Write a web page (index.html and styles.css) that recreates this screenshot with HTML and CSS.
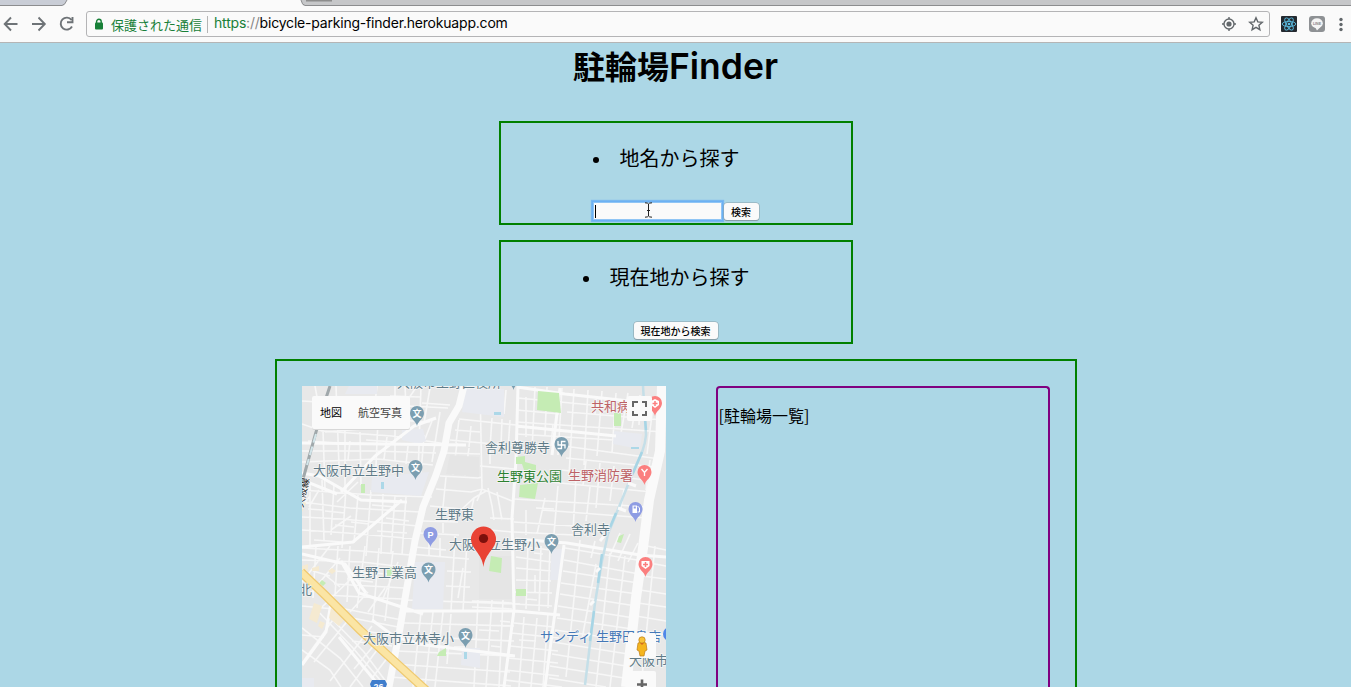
FILE: index.html
```
<!DOCTYPE html>
<html lang="ja">
<head>
<meta charset="utf-8">
<title>駐輪場Finder</title>
<link rel="stylesheet" href="styles.css">
</head>
<body>
<header class="browser">
  <svg class="tabs" width="1351" height="6" viewBox="0 0 1351 6">
    <path d="M0 0H67L64 5.500H0Z" fill="#c9cdd6"/>
    <path d="M301 0H1351V5.500H303Z" fill="#c6c7c9"/>
    <path d="M0 5.500H62Q65 5 67 0M301 0Q302 5 305 5.500H1351" fill="none" stroke="#8c8d8f"/>
    <path d="M306 .5H332" stroke="#8d8d8d" stroke-width="2"/>
  </svg>
  <div class="toolbar">
    <svg class="nav" width="80" height="36" viewBox="0 6 80 36" fill="none" stroke="#6e7377" stroke-width="1.900">
      <path d="M17.500 24H5M11 17.500L4.700 24l6.300 6.500M32 24H44.500M38.500 17.500l6.300 6.500-6.300 6.500"/>
      <path d="M71.500 20A6 6 0 1 0 72 26.500M72.500 17V22.200H67"/>
    </svg>
    <div class="address">
      <svg class="lock" width="10" height="12" viewBox="0 0 10 12"><path d="M2.600 5V3.500a2.300 2.300 0 0 1 4.600 0V5" fill="none" stroke="#188038" stroke-width="1.400"/><rect x="1" y="4.600" width="8" height="7" rx="1" fill="#188038"/></svg>
      <span class="secure">保護された通信</span>
      <span class="url"><span class="scheme">https</span><span class="slashes">://</span>bicycle-parking-finder.herokuapp.com</span>
      <svg class="address-icons" width="46" height="18" viewBox="1220 15 46 18" fill="none" stroke="#62676b" stroke-width="1.400">
        <circle cx="1229" cy="24" r="5"/><circle cx="1229" cy="24" r="2.600" fill="#62676b" stroke="none"/><path d="M1229 17v2M1229 29v2M1222 24h2M1234 24h2"/>
        <path d="M1256 17.800l1.800 4.100 4.500.4-3.400 3 1 4.400-3.900-2.400-3.900 2.400 1-4.400-3.400-3 4.500-.4Z"/>
      </svg>
    </div>
    <svg class="extensions" width="81" height="36" viewBox="1270 6 81 36">
      <rect x="1281" y="16" width="16" height="16" rx="1" fill="#242a30"/>
      <g fill="none" stroke="#5bbde2" stroke-width=".9"><ellipse cx="1289" cy="24" rx="6.800" ry="2.600"/><ellipse cx="1289" cy="24" rx="6.800" ry="2.600" transform="rotate(60 1289 24)"/><ellipse cx="1289" cy="24" rx="6.800" ry="2.600" transform="rotate(120 1289 24)"/></g><circle cx="1289" cy="24" r="1.300" fill="#5bbde2"/>
      <rect x="1309" y="16" width="16" height="16" rx="3" fill="#8e9194"/><ellipse cx="1317" cy="23.200" rx="5.800" ry="5" fill="#f5f5f5"/><path d="M1315 27l2 3.500 4-4Z" fill="#f5f5f5"/><text x="1317" y="24.800" class="line-logo">LINE</text>
      <g fill="#62676b"><circle cx="1341" cy="19.500" r="1.700"/><circle cx="1341" cy="24.500" r="1.700"/><circle cx="1341" cy="29.500" r="1.700"/></g>
    </svg>
  </div>
</header>
<main class="page">
  <h1 class="title">駐輪場<span class="title-latin">Finder</span></h1>
  <section class="search">
    <div class="search-label"><i class="dot"></i>地名から探す</div>
    <div class="search-form"><div class="field"><i class="caret"></i><svg class="ibeam" width="9" height="16" viewBox="0 0 9 16"><path d="M1 .8Q4 .8 4.500 2Q5 .8 8 .8M4.500 2V14M1 15.200Q4 15.200 4.500 14Q5 15.200 8 15.200M3 8.500H6" fill="none" stroke="#222"/></svg></div><button class="button">検索</button></div>
  </section>
  <section class="search">
    <div class="search-label"><i class="dot"></i>現在地から探す</div>
    <div class="search-form"><button class="button button-wide">現在地から検索</button></div>
  </section>
  <section class="results">
    <svg class="map" width="364" height="301" viewBox="302 386 364 301">
      <defs>
        <path id="pin" d="M0 12C-.8 7-7 5-7-1a7 7 0 0 1 14 0C7 5 .8 7 0 12Z"/>
        <g id="school"><use href="#pin" fill="#7b9eb0"/><text class="pin-text" y="2.500">文</text></g>
      </defs>
      <rect x="302" y="386" width="364" height="301" fill="#e8e8e8"/>
      <g class="minor">
        <!-- north-west blocks -->
        <path d="M302 401l34 2 44 16 50 3M315 386l8 44 2 60M336 386l3 80M302 424l20 7 70 5 55 8M302 451h72l62 2M302 462l76-3 55 6M325 432l50-4 30-24 12-18M345 428v60M360 432l1 53M377 386l-5 42M395 386v75M378 419l-3 70M405 386l2 43M421 386l-3 90M388 405l60 3M390 396l30 1M422 403l28 2M430 388l-6 35M440 412l-8 50M308 441l28 2M366 440l29 2M350 441l-2 19M318 409l-4 30M387 437l-3 22M424 435l-3 38M408 446l-2 18M432 421l-7 18"/>
        <path d="M302 490l70 5 60 2M302 502l48 6 70 4M302 517l40 2 76 7M302 530l45 3 70 6M310 482v64M322 480l2 60M334 485l-3 50M346 488l-4 60M358 495l-4 48M371 490l-5 66M383 494l-2 60M395 496l-4 57M406 497l-4 58M325 511l20 2M351 522l18 2M372 505l24 2M386 518l23 3M377 531l30 2M308 509l15 1M335 525l19 2M310 496l-8 10M314 540l28 2M358 482l-21 20M319 490l-10 17M351 516l-20 14"/>
        <!-- north centre -->
        <path d="M459 419l57 6M455 430l25 2M450 440l66 6M446 453l34 1M480 466l34 3M440 476l38 2 4-1M436 489l35 3 11-3 30 12M430 506l32 3 12-11 12-7M446 509l12 2M423 521l35 1M490 518l24 1M490 530l22 2M419 533l40 2M459 420l-3 23M471 426l-2 21M480 386l2 103-5 12M492 418l-2 30M502 419l-1 27M510 420l-2 30M469 448l-4 28M457 443l-4 32M446 477l-3 30M490 450v14M488 488l4 18 2 14M497 492l5 28M443 523v10M506 390l-2 24M474 498l-4 18"/>
        <!-- north-east grid -->
        <path d="M518 398l148 14M517 410l42 4M567 412l97 8M517 422l147 10M516 434l98 6M564 446l96 13M514 447l29 3M566 458l90 9M562 470l92 11M550 482l102 10M514 499l136 8M542 510l104 8M514 522l60 4M514 532l60 3M535 387l-3 64M547 387l-2 48M562 388l-4 67M574 389l-5 87M588 390l-4 75M602 391l-5 65M616 393l-4 60M628 393l-7 40M640 395l-1 30M526 397v40M553 424l-2 22M596 399l-1 15M634 416l-2 12M654 399l-7 55M586 461l-3 24M600 463l-4 45M614 466l-4 35M576 478l-3 54M558 486l-4 48M545 498l-8 36M526 510v25M590 487l-4 34M624 489l-3 19M536 508l18 1M650 460l-4 30"/>
        <!-- south-west -->
        <path d="M302 548l60 3 48 4M302 560l60 2 43 5M333 571l74 4M334 584l70 4M325 595l77 4M338 546l-3 50M350 546l-3 56M365 546l-8 62M379 548l-6 72M393 551l-8 70M316 546l-3 52M302 582l28-36M310 594l30-36M322 607l36-35M302 606l32 3 17 14M302 628l38 30 23 29M302 650l28 20 11 17M315 608l38 40 33 39M330 617l34 35 26 35M340 608l62 12M347 617l51 10M360 630l40 7M352 641l40 5M314 662l35-43M330 681l42-55M350 687l35-48M302 663l33-46M324 574l16 13M313 571l17 5M347 579l26 3M368 592l-18 20M385 588l-17 24M398 562l-16 39M372 678l19-25M302 635l22 2M354 669l27-32"/>
        <!-- centre south -->
        <path d="M409 554l60 5M405 600l115 4M404 623l110 3M399 636l115 5M396 651l118 5M393 664l117 8M390 677l121 9M455 536l-4 75M467 541l-4 70M478 600l-4 87M492 600l-6 87M503 600l-4 87M421 612l-8 75M433 612l-8 75M443 612l-8 75M447 571l24 1M446 586l24 1M463 568l-5 30M415 547l31 3M429 538v18M440 538v19M472 601l40 2M472 607l40 2M454 647h12M417 645l14 1M479 630l20 1M491 646l10 1M451 614l-4 50"/>
        <path d="M517 546l42 5M516 557l35 5M516 568l35 3M516 580l35 1M515 592l37 1M514 604l38 2M528 544l-2 65M541 546l-2 65M550 546l-2 62M514 623l40 4M511 633l48 5M510 646l48 5M508 658l50 5M506 670l53 6M505 680l57 7M524 617l-5 70M537 618l-6 69M548 613l-5 74M519 640l17 1M500 621l10 1M535 575v17M534 553l9 1M527 599l10 1"/>
        <!-- south-east grid -->
        <path d="M565 548l78 13M564 560l75 14M563 571l75 12M561 583l76 11M560 594l76 12M558 606l76 12M557 618l75 11M555 630l76 11M553 642l75 12M552 654l74 12M550 666l74 12M549 678l57 9M580 540l-14 137M595 541l-4 17M596 564l-14 75M610 553l-14 134M625 556l-15 131M620 533l-11 25M630 534l-12 27M638 543l-10 19M647 546l19 4M644 562l22 4M642 576l24 3M640 590l26 4M638 603l28 4M636 616l30 5M633 630l33 5M655 546l-14 141"/>
      </g>
      <g fill="#e8eaf0">
        <path d="M349 386h28v8h-32ZM465 387l39 2v28l-42-5ZM402 430l21-1 3 12-7 3-17-4ZM372 477l57-5-8 24-50-4ZM415 562h30l-2 47h-31ZM552 549h13l-5 31h-10ZM614 431l28 3-2 15-27-5ZM462 648h18v20l-19-3ZM302 678h12v9h-12Z"/>
      </g>
      <path d="M479 556h33v43h-33ZM450 455l29 2v20l-33-3Z" fill="#e5e5e5"/>
      <g class="road">
        <path d="M341 492l34-36 39-30 22-8M302 443l164 2M302 473l17 3 42 24 46 2M302 480l35 14M302 547l51-5 49-42M518 386l-2 74-4 58 2 92-10 77M517 387l48 7 101 11M560 388l-8 67M516 539l51 4 73 12 26 2M405 611h110l45 4M564 545l-19 142M341 561l18 32 64 21M302 554l43 10 21 29M332 597l-6 35-24 33M339 637l41 50M372 620l23 17 31 8 89 11M516 426l100 10"/>
      </g>
      <path d="M464 386l-5 20-10 17-5 28-8 24-13 32-8 34-8 46-8 47-10 53" fill="none" stroke="#fafafa" stroke-width="7"/>
      <path d="M662 386l-2 65-11 49-6 48-7 50-10 89" fill="none" stroke="#fafafa" stroke-width="10"/>
      <path d="M643 386l3 49c-1 12-5 20-12 35l-26 64-6 27-7 42-10 82" class="river"/><path d="M643 396l3 34M642 452l-12 28M616 513l-8 19M602 554l-4 29M594 611l-4 30" class="river-bright"/>
      <path d="M604 536l-4 5M600 568l-4 4M594 601l-4 4M590 633l-4 4M628 483l8 3M618 508l8 3" stroke="#fafafa" stroke-width="3"/>
      <path d="M330 386l-8 24-17 62-4 14" fill="none" stroke="#a0a8ab" stroke-width="3"/><path d="M316 434l-9 31" stroke="#d2e5ea" stroke-width="2" stroke-dasharray="9 4"/>
      <g fill="#c5ecb4"><path d="M538 391l21 2 2 20-24-3ZM614 413h7v13h-7ZM516 457l9-1v6l11 3v7l-12-2-2-6h-6ZM520 485l18-2-3 16-16-2ZM491 556l11 2-1 15-12-2ZM516 589h10v7h-10ZM361 484h4v9h-4ZM319 583l3-3 4 3-3 3ZM439 652l7-4v8h-9ZM619 536l5-2-3 9-4-1ZM387 567h8v9h-8Z"/></g>
      <path d="M494 412h7v3h-7ZM381 482h3v7h-3ZM464 652h3v7h-3ZM631 447h8v2h-8Z" fill="#acd8e8"/>
      <g fill="#f5ead1"><path d="M302 566l6-2v7l-6-1ZM312 568l7-2v5h-7ZM332 568l4 3-4 3-4-3ZM314 603l8 3-5 17-8-4ZM331 608l13 12-5 6-10-8ZM320 621l5 2-3 6-4-3ZM302 501l4 2-4 9Z"/></g>
      <path d="M301 572l24 23 35 35 68 62" fill="none" stroke="#efca71" stroke-width="9"/><path d="M301 572l24 23 35 35 68 62" fill="none" stroke="#fbe5a4" stroke-width="6.500"/>
      <g class="labels">
        <text x="397" y="387">大阪市生野区役所</text><text x="313" y="475">大阪市立生野中</text><text x="485" y="452">舎利尊勝寺</text><text x="435" y="519">生野東</text><text x="571" y="534">舎利寺</text><text x="352" y="577">生野工業高</text><text x="449" y="549">大阪市立生野小</text><text x="363" y="643">大阪市立林寺小</text><text x="629" y="665">大阪市立</text><text x="299" y="594">北</text>
        <text x="497" y="481" class="park-label">生野東公園</text><text x="568" y="480" class="red-label">生野消防署</text><text x="591" y="411" class="red-label">共和病院</text><text x="540" y="641" class="shop-label">サンディ<tspan x="596">生野田島店</tspan></text>
        <text x="0" y="0" class="rail-label" transform="translate(303 508) rotate(-78)">大阪線</text>
      </g>
      <use href="#school" x="417" y="414"/><use href="#school" x="415.500" y="468"/><use href="#school" x="428.500" y="570.500"/><use href="#school" x="551.500" y="542"/><use href="#school" x="465.500" y="636"/><use href="#school" x="513.500" y="378"/>
      <g transform="translate(561.500 445)"><use href="#pin" fill="#7b9eb0"/><path d="M-3.500-4V0H3.500V3.500M4-3.500H0V3.500H-4" fill="none" stroke="#fff" stroke-width="1.300"/></g>
      <g transform="translate(430.500 535)"><use href="#pin" fill="#8e9ce3"/><text class="parking-text" y="2.500">P</text></g>
      <g transform="translate(635.500 510)"><use href="#pin" fill="#8e9ce3"/><path d="M-3-4.500H1.500V3H-3Z" fill="#fff"/><path d="M-1.800-3.500H.3V-1.500H-1.800Z" fill="#8e9ce3"/><path d="M2-4l2 2V2H2" fill="none" stroke="#fff"/></g>
      <g transform="translate(644.500 473)"><use href="#pin" fill="#fb7f7f"/><path d="M-3-4L0-.5 3-4M0-.5V3" fill="none" stroke="#fff" stroke-width="1.300"/></g>
      <g transform="translate(655 404)"><use href="#pin" fill="#fb7f7f"/><path d="M0-5L4-3V1L0 4-4 1V-3Z" fill="#fff"/><path d="M0-3V2M-2.500-.5H2.500" stroke="#fb7f7f" stroke-width="1.500"/></g>
      <g transform="translate(645.500 565)"><use href="#pin" fill="#fb7f7f"/><path d="M-4-4H4V1L0 4-4 1Z" fill="#fff"/><path d="M0-3V2M-2.500-.5H2.500" stroke="#fb7f7f" stroke-width="1.500"/></g>
      <circle cx="670" cy="634" r="7" fill="#4f87e8"/>
      <path d="M483.500 567C482 553 471 549 471 539a12.500 12.500 0 0 1 25 0C496 549 485 553 483.500 567Z" fill="#e94234"/><circle cx="483.500" cy="538.500" r="4.600" fill="#7d100c"/>
      <path d="M372 680h13l2 4-2 6h-13l-2-6Z" fill="#3f7dcc"/><text x="378.500" y="690" class="route-text">26</text>
      <rect x="312" y="397" width="98" height="33" rx="2" fill="#d8d8d8"/><rect x="312" y="396" width="98" height="33" rx="2" fill="#fafafa"/>
      <text x="320" y="416.500" class="map-type">地図</text><text x="358" y="416.500" class="map-type muted">航空写真</text>
      <rect x="627" y="396" width="25" height="25" rx="2" fill="#fafafa"/><path d="M633 407v-5h5M642 402h4v5M646 411v4h-4M638 415h-5v-4" fill="none" stroke="#666" stroke-width="2"/>
      <rect x="628" y="633" width="28" height="25" rx="2" fill="#fafafa"/>
      <path d="M638 643q4-2 8 0l1 7-2 1-1 5h-4l-1-5-2-1Z" fill="#f5b51e" stroke="#bd7d14" stroke-width=".7"/><circle cx="642" cy="640" r="3.200" fill="#f8c33a" stroke="#bd7d14" stroke-width=".7"/><path d="M640 643h4l-2 2Z" fill="#d46a20"/>
      <rect x="628" y="671" width="28" height="20" rx="2" fill="#fafafa"/><path d="M637 684.500h10M642 679.500v10" stroke="#666" stroke-width="2.600"/>
    </svg>
    <div class="list">[駐輪場一覧]</div>
  </section>
</main>
</body>
</html>
```
FILE: styles.css
```
* { box-sizing: border-box; }
body { margin: 0; height: 687px; overflow: hidden; background: #acd7e6; color: #000; font-family: "Noto Sans CJK JP", sans-serif; }
svg { display: block; flex: none; }
.browser { height: 43px; background: #fafafa; border-bottom: 1px solid #b5b5b5; }
.toolbar { display: flex; align-items: center; height: 36px; }
.nav { margin-right: 6px; }
.address { display: flex; align-items: center; width: 1184px; height: 26px; border: 1px solid #b4b4b6; border-radius: 3px; padding-left: 7px; font-size: 13px; }
.secure { color: #188038; border-right: 1px solid #b5b5b5; line-height: 17px; margin-left: 7px; padding-right: 5px; white-space: nowrap; }
.url { font-family: Inter, sans-serif; font-size: 14px; line-height: 18px; margin: 0 0 2px 6px; letter-spacing: -.2px; white-space: nowrap; }
.scheme { color: #188038; }
.slashes { color: #888; }
.address-icons { margin-left: auto; margin-right: 3px; }
.line-logo { font: bold 3.600px "Liberation Sans", sans-serif; fill: #888; text-anchor: middle; }
.page { display: flex; flex-direction: column; align-items: center; gap: 15px; }
.title { margin: 0 0 15px; height: 48px; font-size: 32px; line-height: 44px; font-weight: 700; white-space: nowrap; }
.title-latin { font-family: Inter, sans-serif; font-weight: 600; font-size: 35.500px; }
.search { width: 354px; height: 104px; border: 2px solid green; padding-top: 20px; flex: none; }
.search-label { display: flex; align-items: center; justify-content: center; gap: 21px; padding-right: 19px; font-size: 20px; line-height: 30px; }
.dot { width: 6px; height: 6px; margin-top: 3px; border-radius: 50%; background: #000; }
.search-form { display: flex; justify-content: center; gap: 2px; margin-top: 29px; }
.field { display: flex; align-items: center; width: 129px; height: 18px; padding-left: 1px; background: #fafafa; border: 1px solid #8fc5f5; box-shadow: 0 0 0 1px #6cb1f4, 0 0 1px 2px #79b8ef; }
.caret { width: 1px; height: 13px; background: #000; }
.ibeam { margin-left: 48px; margin-top: -2px; }
.button { width: 35px; height: 17px; margin: 1px 0 0; padding: 0; border: 0; border-radius: 3px; background: #fafafa; color: #000; box-shadow: 0 0 0 .5px #8a9fa8, 0 1px 1px #839ba5; font: 500 10px/17px "Noto Sans CJK JP", sans-serif; white-space: nowrap; }
.button-wide { width: 84px; }
.results { display: flex; gap: 50px; width: 802px; height: 328px; padding: 25px 25px 0; border: 2px solid green; border-bottom: 0; flex: none; }
.list { width: 334px; border: 2px solid purple; border-bottom: 0; border-radius: 4px 4px 0 0; padding: 15px 1px 0; font-size: 16px; line-height: 24px; }
.minor { fill: none; stroke: #f7f7f7; stroke-width: 1.600; }
.road { fill: none; stroke: #fafafa; stroke-width: 3; }
.river { fill: none; stroke: #c5dfe8; stroke-width: 2.500; }
.river-bright { fill: none; stroke: #a7d5e5; stroke-width: 2.500; }
.labels text { font-size: 13px; fill: #607b88; stroke: #f6f6f6; stroke-width: 1.500px; paint-order: stroke; }
.labels .park-label { fill: #2c8130; }
.labels .red-label { fill: #bd6266; }
.labels .shop-label { fill: #4478b7; }
.labels .rail-label { fill: #222; font-size: 10px; }
.pin-text { font-size: 9px; font-weight: 700; fill: #fff; text-anchor: middle; }
.parking-text { font: bold 9px "Liberation Sans", sans-serif; fill: #fff; text-anchor: middle; }
.route-text { font: bold 9px "Liberation Sans", sans-serif; fill: #fff; text-anchor: middle; }
.map-type { font-size: 11px; fill: #000; }
.muted { fill: #444; }
```
